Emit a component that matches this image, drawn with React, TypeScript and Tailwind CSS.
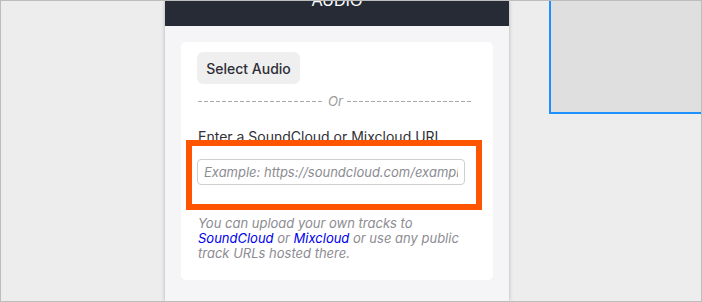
import React from "react";

export default function App() {
  return (
    <div className="w-[702px] h-[302px] overflow-hidden border border-[#bdbdbd] bg-[#ededed] flex items-start font-['Inter',sans-serif]">
      <div className="ml-[164px] w-[344px] h-[300px] shrink-0 bg-[#f5f5f7] shadow-[0_0_4px_rgba(0,0,0,0.25)] flex flex-col">
        <div className="h-[25px] bg-[#262b36] overflow-hidden flex justify-center">
          <span className="mt-[-8px] text-[16px] leading-none text-white font-['Liberation_Sans',Arial,sans-serif]">
            AUDIO
          </span>
        </div>
        <div className="px-4 pt-4">
          <div className="relative bg-white rounded-[5px] px-4 pt-[10px] pb-[19px]">
            <button className="w-[103px] h-8 rounded-md bg-[#efefef] text-[14px] font-medium text-[#2e2e36]">
              Select Audio
            </button>
            <div className="mt-[10px] h-[14px] w-[275px] ml-px flex items-center gap-1">
              <div className="flex-1 h-px bg-[repeating-linear-gradient(to_right,#a8a8a8_0_4px,transparent_4px_6px)]" />
              <span className="text-[13px] leading-none italic text-[#9a9a9a]">Or</span>
              <div className="flex-1 h-px bg-[repeating-linear-gradient(to_right,#a8a8a8_0_4px,transparent_4px_6px)]" />
            </div>
            <div className="mt-[19px] text-[14px] leading-5 text-[#303036] ml-px whitespace-nowrap">
              Enter a SoundCloud or Mixcloud URL
            </div>
            <input
              className="mt-[12px] block w-[268px] h-[26px] rounded-[4px] border border-[#cfcfcf] px-[6px] text-[13px] italic outline-none placeholder:text-[#8c8c92]"
              placeholder="Example: https://soundcloud.com/example"
            />
            <p className="mt-[31px] ml-px text-[13px] leading-[15px] italic text-[#8c8c92] whitespace-nowrap">
              You can upload your own tracks to
              <br />
              <a className="text-[#0000ee]">SoundCloud</a> or{" "}
              <a className="text-[#0000ee]">Mixcloud</a> or use any public
              <br />
              track URLs hosted there.
            </p>
            <div className="absolute left-[5px] top-[98px] w-[296px] h-[70px] border-[6px] border-[#ff5500] pointer-events-none" />
          </div>
        </div>
      </div>
      <div className="ml-10 flex-1 h-[113px] bg-[#dfdfdf] border-l-2 border-b-2 border-[#1e90ff]" />
    </div>
  );
}
